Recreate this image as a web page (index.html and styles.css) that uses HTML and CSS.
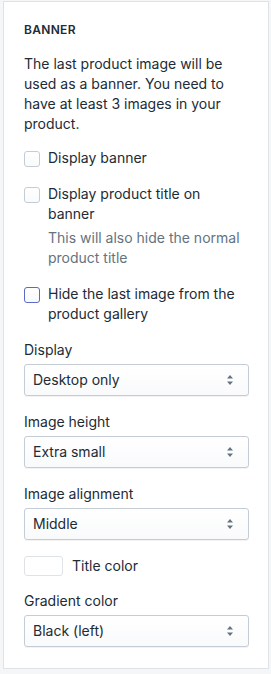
FILE: index.html
```html
<!DOCTYPE html>
<html lang="en">
<head>
    <meta charset="UTF-8">
    <meta name="viewport" content="width=device-width, initial-scale=1.0">
    <title>Banner settings</title>
    <link rel="stylesheet" href="styles.css">
</head>
<body>
    <div class="panel">
        <h3 class="panel-title">Banner</h3>
        <p class="panel-text">The last product image will be used as a banner. You need to have at least 3 images in your product.</p>

        <label class="check">
            <span class="check-box"></span>
            <span class="check-label">Display banner</span>
        </label>

        <div class="check">
            <span class="check-box"></span>
            <div>
                <span class="check-label">Display product title on banner</span>
                <p class="help">This will also hide the normal product title</p>
            </div>
        </div>

        <label class="check">
            <span class="check-box focused"></span>
            <span class="check-label">Hide the last image from the product gallery</span>
        </label>

        <div class="field">
            <div class="field-label">Display</div>
            <div class="select">
                <span>Desktop only</span>
                <svg class="arrows" width="8" height="10" viewBox="0 0 8 10"><path d="M4 0 L7 3.5 H1 Z M4 10 L1 6.5 H7 Z" fill="#637381"/></svg>
            </div>
        </div>

        <div class="field">
            <div class="field-label">Image height</div>
            <div class="select">
                <span>Extra small</span>
                <svg class="arrows" width="8" height="10" viewBox="0 0 8 10"><path d="M4 0 L7 3.5 H1 Z M4 10 L1 6.5 H7 Z" fill="#637381"/></svg>
            </div>
        </div>

        <div class="field">
            <div class="field-label">Image alignment</div>
            <div class="select">
                <span>Middle</span>
                <svg class="arrows" width="8" height="10" viewBox="0 0 8 10"><path d="M4 0 L7 3.5 H1 Z M4 10 L1 6.5 H7 Z" fill="#637381"/></svg>
            </div>
        </div>

        <div class="color-row">
            <span class="swatch"></span>
            <span>Title color</span>
        </div>

        <div class="field">
            <div class="field-label">Gradient color</div>
            <div class="select">
                <span>Black (left)</span>
                <svg class="arrows" width="8" height="10" viewBox="0 0 8 10"><path d="M4 0 L7 3.5 H1 Z M4 10 L1 6.5 H7 Z" fill="#637381"/></svg>
            </div>
        </div>
    </div>
</body>
</html>
```

FILE: styles.css
```css
body {
    font-family: Inter, "Noto Sans", sans-serif;
    font-size: 14px;
    line-height: 20px;
    color: #212b36;
    background-color: #f4f6f8;
    margin: 0;
    padding: 1px 2px 0 3px;
}
.panel {
    background-color: #fff;
    border: 1px solid #dfe3e8;
    padding: 20px 19px 21px 20px;
}
.panel-title {
    margin: 0 0 16px;
    font-size: 12px;
    line-height: 16px;
    font-weight: 600;
    text-transform: uppercase;
    letter-spacing: 0.3px;
}
.panel-text {
    margin: 0 0 14px;
}
.check {
    display: flex;
    gap: 8px;
    margin-bottom: 16px;
}
.check-box {
    flex: none;
    width: 14px;
    height: 14px;
    margin-top: 3px;
    border: 1px solid #c4cdd5;
    border-radius: 3px;
    background: linear-gradient(#fff, #f9fafb);
}
.check-box.focused {
    border-color: #5c6ac4;
}
.help {
    margin: 4px 0 0;
    color: #637381;
}
.field {
    margin-bottom: 16px;
}
.field-label {
    margin-bottom: 4px;
}
.select {
    display: flex;
    align-items: center;
    justify-content: space-between;
    height: 30px;
    padding: 0 14px 0 8px;
    border: 1px solid #c4cdd5;
    border-radius: 3px;
    background: linear-gradient(#fff, #f9fafb);
    box-shadow: 0 1px 0 rgba(22, 29, 37, 0.05);
}
.color-row {
    display: flex;
    align-items: center;
    gap: 9px;
    margin-bottom: 15px;
}
.swatch {
    width: 37px;
    height: 18px;
    border: 1px solid #dfe3e8;
    border-radius: 3px;
    background: #fff;
}
.field:last-child {
    margin-bottom: 0;
}
```
